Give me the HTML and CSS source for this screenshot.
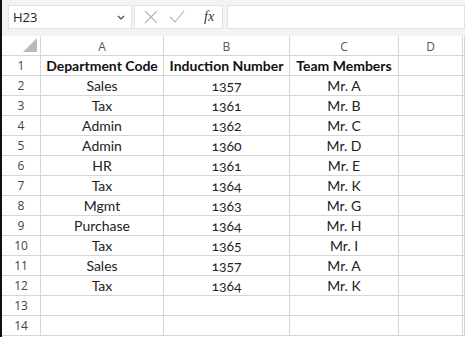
FILE: index.html
```html
<!DOCTYPE html>
<html lang="en">
<head>
    <meta charset="UTF-8">
    <meta name="viewport" content="width=device-width, initial-scale=1.0">
    <title>Sheet</title>
    <link rel="stylesheet" href="styles.css">
</head>
<body>
    <div class="app">
        <!-- Formula bar -->
        <div class="formula-bar">
            <div class="name-box">
                <span>H23</span>
                <svg class="chevron" width="8" height="5" viewBox="0 0 8 5"><path d="M1 1 L4 4 L7 1" fill="none" stroke="#444" stroke-width="1.2"/></svg>
            </div>
            <div class="func-box">
                <svg width="14" height="14" viewBox="0 0 14 14"><path d="M1 1 L13 13 M13 1 L1 13" stroke="#b3b3b3" stroke-width="1.1" fill="none"/></svg>
                <svg width="16" height="14" viewBox="0 0 16 14"><path d="M1 7 L6 12 L15 1" stroke="#b3b3b3" stroke-width="1.1" fill="none"/></svg>
                <span class="fx">fx</span>
            </div>
            <div class="formula-input"></div>
        </div>

        <!-- Grid -->
        <div class="sheet">
            <div class="cell corner"><span class="tri"></span></div>
            <div class="cell col-head">A</div>
            <div class="cell col-head">B</div>
            <div class="cell col-head">C</div>
            <div class="cell col-head">D</div>
            <div class="cell col-head"></div>
        </div>
        <div class="sheet" id="rows"></div>
    </div>

    <script>
        var data = [
            ['Department Code', 'Induction Number', 'Team Members'],
            ['Sales', '1357', 'Mr. A'],
            ['Tax', '1361', 'Mr. B'],
            ['Admin', '1362', 'Mr. C'],
            ['Admin', '1360', 'Mr. D'],
            ['HR', '1361', 'Mr. E'],
            ['Tax', '1364', 'Mr. K'],
            ['Mgmt', '1363', 'Mr. G'],
            ['Purchase', '1364', 'Mr. H'],
            ['Tax', '1365', 'Mr. I'],
            ['Sales', '1357', 'Mr. A'],
            ['Tax', '1364', 'Mr. K'],
            ['', '', ''],
            ['', '', '']
        ];

        var rows = document.getElementById('rows');
        for (var i = 0; i < data.length; i++) {
            var html = '<div class="cell row-head">' + (i + 1) + '</div>';
            for (var j = 0; j < 3; j++) {
                var cls = 'cell data' + (i === 0 ? ' bold' : '');
                html += '<div class="' + cls + '">' + data[i][j] + '</div>';
            }
            html += '<div class="cell data"></div><div class="cell data"></div>';
            rows.insertAdjacentHTML('beforeend', html);
        }
    </script>
</body>
</html>
```

FILE: styles.css
```css
body {
    margin: 0;
    padding: 0;
    background: #fff;
}

.app {
    width: 465px;
    height: 337px;
    box-sizing: border-box;
    border-left: 2px solid #111;
    overflow: hidden;
    background: #fff;
}

.formula-bar {
    height: 36px;
    background: #f3f3f3;
    display: flex;
    align-items: flex-start;
    padding: 5px 0 0 6px;
    box-sizing: border-box;
    gap: 2px;
}

.name-box {
    width: 124px;
    height: 24px;
    box-sizing: border-box;
    background: #fff;
    border: 1px solid #e3e3e3;
    display: flex;
    align-items: center;
    justify-content: space-between;
    padding: 0 6px 0 4px;
    font-family: "Open Sans", sans-serif;
    font-size: 13px;
    color: #222;
}

.func-box {
    width: 89px;
    height: 24px;
    box-sizing: border-box;
    background: #fff;
    border: 1px solid #e3e3e3;
    display: flex;
    align-items: center;
    padding: 0 0 0 9px;
    gap: 11px;
}

.fx {
    font-family: "Liberation Serif", serif;
    font-style: italic;
    font-size: 14px;
    color: #333;
    margin-left: 8px;
}

.formula-input {
    flex: 1;
    height: 24px;
    box-sizing: border-box;
    background: #fff;
    border: 1px solid #e3e3e3;
    margin-left: 2px;
}

.sheet {
    display: grid;
    grid-template-columns: 39px 123px 126px 109px 64px 1fr;
    grid-auto-rows: 20px;
}

.cell {
    box-sizing: border-box;
    border-right: 1px solid #d6d6d6;
    border-bottom: 1px solid #d6d6d6;
    display: flex;
    align-items: center;
    justify-content: center;
    white-space: nowrap;
    overflow: hidden;
}

.corner {
    position: relative;
    background: #fff;
}

.tri {
    position: absolute;
    right: 3px;
    bottom: 3px;
    width: 0;
    height: 0;
    border-left: 14px solid transparent;
    border-bottom: 14px solid #b9b9b9;
}

.col-head {
    background: #fff;
    font-family: "Open Sans", sans-serif;
    font-size: 12px;
    color: #555;
    padding-top: 1px;
}

.row-head {
    font-family: "Open Sans", sans-serif;
    font-size: 12px;
    color: #444;
}

.data {
    font-family: Lato, sans-serif;
    font-size: 14px;
    color: #222;
    font-variant-numeric: oldstyle-nums;
}

.bold {
    font-weight: bold;
    color: #111;
}
```
